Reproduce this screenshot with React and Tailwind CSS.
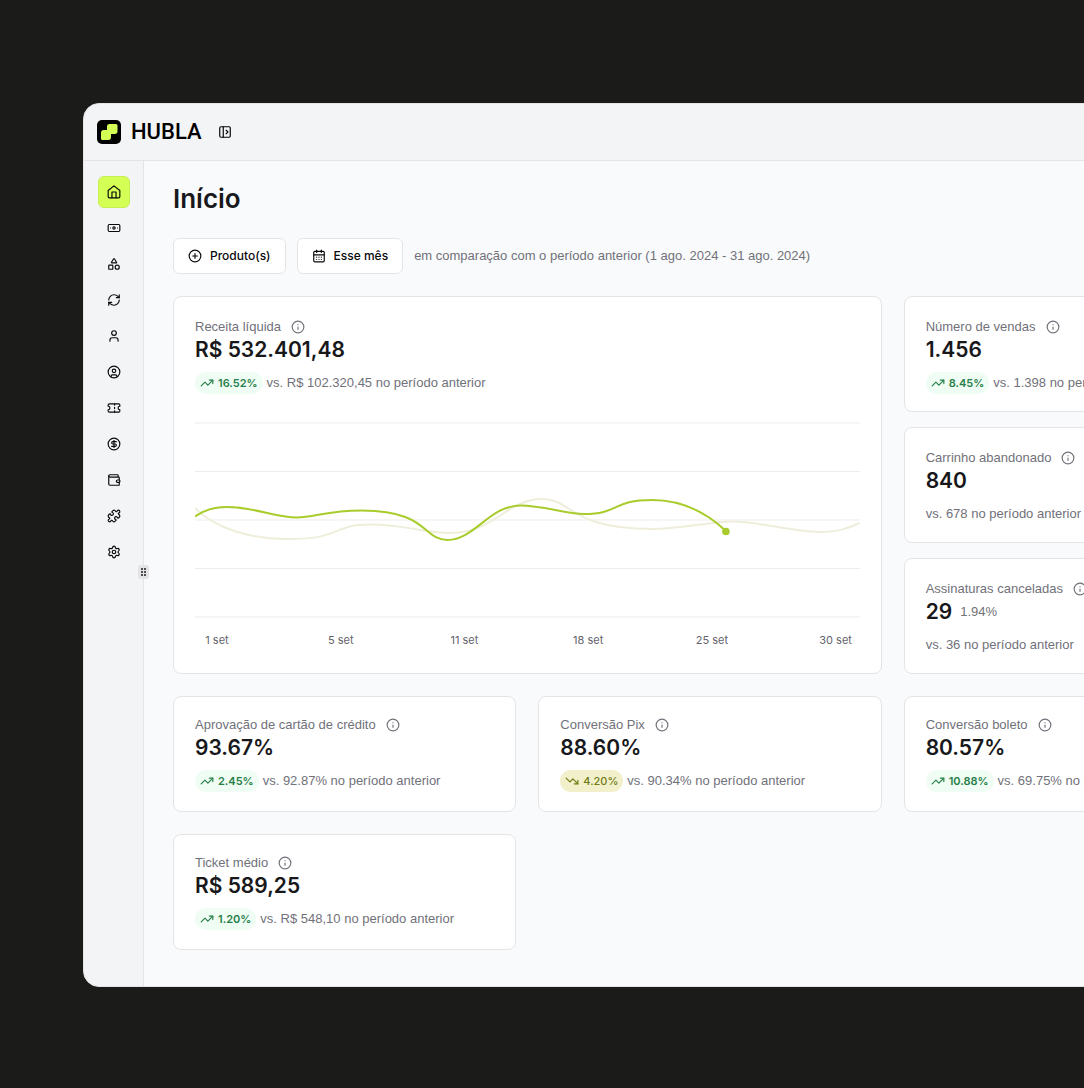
import React from 'react';
import {
  Banknote,
  CalendarDays,
  CircleDollarSign,
  CirclePlus,
  CircleUser,
  Info,
  PanelLeftOpen,
  Puzzle,
  RefreshCw,
  Settings,
  Shapes,
  TrendingDown,
  TrendingUp,
  User,
  Wallet,
} from 'lucide-react';

const House = ({ className }) => (
  <svg viewBox="0 0 24 24" className={className} fill="none" stroke="currentColor" strokeWidth="2" strokeLinecap="round" strokeLinejoin="round">
    <path d="M2 9.500 12 1.500 22 9.500v10.500a2 2 0 0 1-2 2H4a2 2 0 0 1-2-2z" />
    <path d="M8.500 22v-10h7v10" />
  </svg>
);

const Ticket = ({ className }) => (
  <svg viewBox="0 0 24 24" className={className} fill="none" stroke="currentColor" strokeWidth="2" strokeLinecap="round" strokeLinejoin="round">
    <path d="M2 9a3 3 0 0 1 0 6v2a2 2 0 0 0 2 2h16a2 2 0 0 0 2-2v-2a3 3 0 0 1 0-6V7a2 2 0 0 0-2-2H4a2 2 0 0 0-2 2Z" />
    <path d="M13 5v2M13 17v2M13 11v2" />
  </svg>
);

const navItems = [
  { label: 'Início', icon: House, active: true },
  { label: 'Vendas', icon: Banknote },
  { label: 'Produtos', icon: Shapes },
  { label: 'Assinaturas', icon: RefreshCw },
  { label: 'Clientes', icon: User },
  { label: 'Afiliados', icon: CircleUser },
  { label: 'Cupons', icon: Ticket },
  { label: 'Financeiro', icon: CircleDollarSign },
  { label: 'Carteira', icon: Wallet },
  { label: 'Integrações', icon: Puzzle },
  { label: 'Configurações', icon: Settings },
];

const sideStats = [
  { label: 'Número de vendas', value: '1.456', change: '8.45%', note: 'vs. 1.398 no período anterior' },
  { label: 'Carrinho abandonado', value: '840', note: 'vs. 678 no período anterior' },
  { label: 'Assinaturas canceladas', value: '29', extra: '1.94%', note: 'vs. 36 no período anterior' },
];

const bottomStats = [
  { label: 'Aprovação de cartão de crédito', value: '93.67%', change: '2.45%', note: 'vs. 92.87% no período anterior' },
  { label: 'Conversão Pix', value: '88.60%', change: '4.20%', down: true, note: 'vs. 90.34% no período anterior' },
  { label: 'Conversão boleto', value: '80.57%', change: '10.88%', note: 'vs. 69.75% no período anterior' },
  { label: 'Ticket médio', value: 'R$ 589,25', change: '1.20%', note: 'vs. R$ 548,10 no período anterior' },
];

const days = ['1 set', '5 set', '11 set', '18 set', '25 set', '30 set'];

const Logo = () => (
  <a href="#" className="flex items-center gap-2.5 text-black">
    <svg viewBox="0 0 24 24" className="size-6" aria-hidden="true">
      <rect width="24" height="24" rx="5" fill="#000" />
      <path d="M12.500 4H19a1.500 1.500 0 0 1 1.500 1.500v5.800a2.700 2.700 0 0 1-2.700 2.700H14v3.300a2.700 2.700 0 0 1-2.700 2.700H5.500A1.500 1.500 0 0 1 4 18.500v-5.800A2.700 2.700 0 0 1 6.700 10H10V6.500A2.500 2.500 0 0 1 12.500 4Z" fill="#d4ff54" />
    </svg>
    <span className="font-[Roboto,sans-serif] text-[22px] leading-6 font-medium">HUBLA</span>
  </a>
);

const Badge = ({ children, down }) => {
  const Icon = down ? TrendingDown : TrendingUp;
  return (
    <span
      className={`flex h-[22px] items-center gap-1 rounded-full px-[5px] font-[Inter,sans-serif] text-[11px] ${
        down ? 'bg-[#f2f0cb] font-medium text-[#6f7a12]' : 'bg-[#f0fdf4] font-semibold text-[#27804a]'
      }`}
    >
      <Icon className="size-3.5" />
      {children}
    </span>
  );
};

const Stat = ({ label, value, change, down, extra, note }) => (
  <div>
    <div className="flex h-[18px] items-center gap-2.5 text-[13px] whitespace-nowrap text-[#71717a]">
      {label}
      <button type="button" aria-label={`Sobre ${label}`}>
        <Info className="size-3.5" />
      </button>
    </div>
    <div className="flex items-center gap-2">
      <strong className="font-[Inter,sans-serif] text-[21px] leading-7 font-semibold text-[#18181b]">{value}</strong>
      {extra && <span className="text-[13px] text-[#71717a]">{extra}</span>}
    </div>
    <div className="mt-2 flex h-[22px] items-center gap-1 text-[13px] whitespace-nowrap text-[#71717a]">
      {change && <Badge down={down}>{change}</Badge>}
      {note}
    </div>
  </div>
);

const Card = ({ children, className = '' }) => (
  <section className={`rounded-lg border border-[#e4e4e7] bg-white px-[21px] ${className}`}>{children}</section>
);

const Chart = () => (
  <div className="mt-7">
    <svg viewBox="0 0 666 196" preserveAspectRatio="none" className="h-[196px] w-full" fill="none" role="img" aria-label="Receita líquida por dia">
      {[1, 49.5, 98, 146.5, 195].map(y => (
        <path key={y} d={`M0 ${y}H666`} stroke="#ececee" />
      ))}
      <path
        d="M0 86C20 106 54 117 93 117C150 117 135 102.500 176 102.500C210 102.500 230 111 256 111C300 111 312 77 348 77C378 77 375 107 458 107C490 107 515 99.500 539 99.500C565 99.500 598 110 626 110C645 110 655 106 666 101"
        stroke="#efeedb"
        strokeWidth="2"
      />
      <path
        d="M0 94.500C9 88 20 85 32 85C60 85 80 95.500 102 95.500C120 95.500 132 88.500 167 88.500C234 88.500 228 118 253 118C280 118 295 83.500 326 83.500C350 83.500 370 92 390 92C425 92 418 78 458 78C490 78 514 92 532 109"
        stroke="#a8cc2c"
        strokeWidth="2"
      />
      <circle cx="532" cy="109.500" r="3.800" fill="#a8cc2c" />
    </svg>
    <div className="mt-3.5 flex justify-between pr-0.5 font-[Inter,sans-serif] text-[11px] leading-4 text-[#63636b]">
      {days.map(day => (
        <span key={day} className="w-11 text-center">{day}</span>
      ))}
    </div>
  </div>
);

const App = () => {
  return (
    <div className="min-h-screen overflow-hidden bg-[#1b1b1a] pt-[103px] pb-[101px] pl-[83px] font-['Liberation_Sans',sans-serif]">
      <div className="min-w-[1194px] overflow-hidden rounded-l-2xl border border-[#e4e4e7] bg-[#f3f4f6]">
        <header className="flex h-[57px] items-center gap-4 border-b border-[#e4e4e7] px-[13px]">
          <Logo />
          <button type="button" aria-label="Expandir menu">
            <PanelLeftOpen className="size-3.5" />
          </button>
        </header>

        <div className="flex">
          {/* Sidebar */}
          <nav className="relative flex w-[60px] shrink-0 flex-col items-center gap-1 border-r border-[#e4e4e7] pt-[15px]">
            {navItems.map(({ label, icon: Icon, active }) => (
              <a
                key={label}
                href="#"
                aria-label={label}
                className={`flex size-8 items-center justify-center rounded-md text-[#09090b] ${active ? 'border border-[#c9ee55] bg-[#d4ff54]' : ''}`}
              >
                <Icon className="size-3.5" />
              </a>
            ))}
            <button type="button" aria-label="Redimensionar menu" className="absolute top-[404px] -right-1.5 flex h-3.5 w-[11px] items-center justify-center rounded-xs bg-[#e4e4e7]">
              <svg viewBox="0 0 5 8" className="h-2 w-[5px]" fill="#09090b">
                {[1, 4, 7].map(y => (
                  <g key={y}>
                    <circle cx="1" cy={y} r="0.9" />
                    <circle cx="4" cy={y} r="0.9" />
                  </g>
                ))}
              </svg>
            </button>
          </nav>

          <main className="flex-1 bg-[#f9fafb] px-[29px] pt-[22px] pb-9">
            <h1 className="font-[Inter,sans-serif] text-[26px] leading-8 font-semibold text-[#18181b]">Início</h1>

            {/* Filters */}
            <div className="mt-[23px] flex items-center gap-[11px] text-[13px]">
              <button type="button" className="flex h-9 items-center gap-2 rounded-md border border-[#e4e4e7] bg-white px-3.5 font-[Inter,sans-serif] text-xs font-medium text-[#09090b]">
                <CirclePlus className="size-3.5" />
                Produto(s)
              </button>
              <button type="button" className="flex h-9 items-center gap-2 rounded-md border border-[#e4e4e7] bg-white px-3.5 font-[Inter,sans-serif] text-xs font-medium text-[#09090b]">
                <CalendarDays className="size-3.5" />
                Esse mês
              </button>
              <p className="text-[#71717a]">em comparação com o período anterior (1 ago. 2024 - 31 ago. 2024)</p>
            </div>

            <div className="mt-[22px] grid grid-cols-3 gap-[22px]">
              <Card className="col-span-2 pt-[21px] pb-[25px]">
                <Stat label="Receita líquida" value="R$ 532.401,48" change="16.52%" note="vs. R$ 102.320,45 no período anterior" />
                <Chart />
              </Card>
              <div className="grid grid-rows-3 gap-[15px]">
                {sideStats.map(stat => (
                  <Card key={stat.label} className="flex items-center pt-1">
                    <Stat {...stat} />
                  </Card>
                ))}
              </div>
              {bottomStats.map(stat => (
                <Card key={stat.label} className="py-[19px]">
                  <Stat {...stat} />
                </Card>
              ))}
            </div>
          </main>
        </div>
      </div>
    </div>
  );
};

export default App;
